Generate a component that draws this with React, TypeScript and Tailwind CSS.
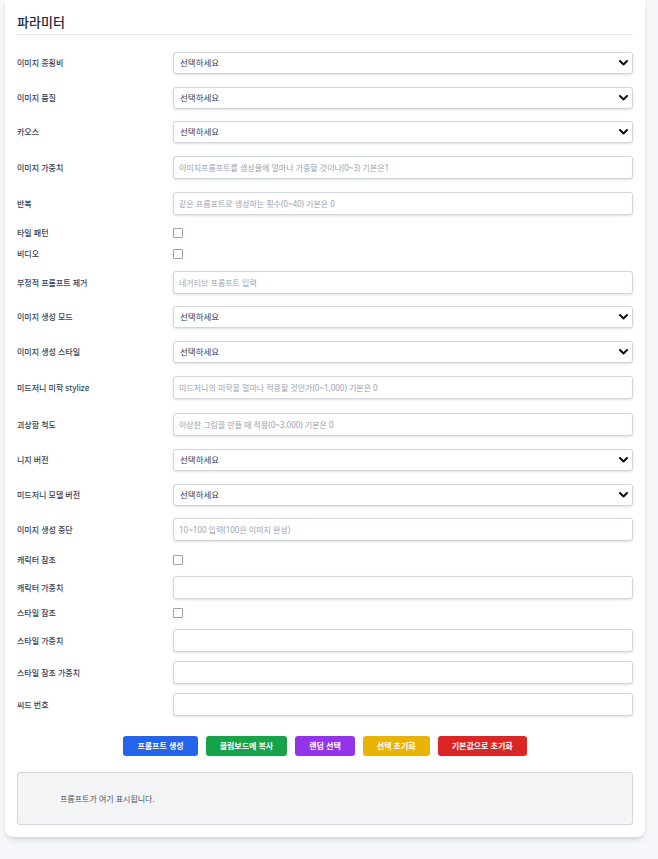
import React from 'react';

type Row = {
  label: string;
  kind: 'select' | 'input' | 'check';
  placeholder?: string;
  gap: string;
};

const rows: Row[] = [
  { label: '이미지 종횡비', kind: 'select', gap: 'mt-0' },
  { label: '이미지 품질', kind: 'select', gap: 'mt-[13px]' },
  { label: '카오스', kind: 'select', gap: 'mt-[12px]' },
  { label: '이미지 가중치', kind: 'input', placeholder: '이미지프롬프트를 생성물에 얼마나 가중할 것이나(0~3) 기본은1', gap: 'mt-[13px]' },
  { label: '반복', kind: 'input', placeholder: '같은 프롬프트로 생성하는 횟수(0~40) 기본은 0', gap: 'mt-[13px]' },
  { label: '타일 패턴', kind: 'check', gap: 'mt-[13px]' },
  { label: '비디오', kind: 'check', gap: 'mt-[12px]' },
  { label: '부정적 프롬프트 제거', kind: 'input', placeholder: '네거티브 프롬프트 입력', gap: 'mt-[13px]' },
  { label: '이미지 생성 모드', kind: 'select', gap: 'mt-[12px]' },
  { label: '이미지 생성 스타일', kind: 'select', gap: 'mt-[13px]' },
  { label: '미드저니 미학 stylize', kind: 'input', placeholder: '미드저니의 미학을 얼마나 적용할 것인가(0~1,000) 기본은 0', gap: 'mt-[13px]' },
  { label: '괴상함 척도', kind: 'input', placeholder: '이상한 그림을 만들 때 적용(0~3,000) 기본은 0', gap: 'mt-[14px]' },
  { label: '니지 버전', kind: 'select', gap: 'mt-[13px]' },
  { label: '미드저니 모델 버전', kind: 'select', gap: 'mt-[13px]' },
  { label: '이미지 생성 중단', kind: 'input', placeholder: '10~100 입력(100은 이미지 완성)', gap: 'mt-[12px]' },
  { label: '캐릭터 참조', kind: 'check', gap: 'mt-[14px]' },
  { label: '캐릭터 가중치', kind: 'input', gap: 'mt-[12px]' },
  { label: '스타일 참조', kind: 'check', gap: 'mt-[9px]' },
  { label: '스타일 가중치', kind: 'input', gap: 'mt-[12px]' },
  { label: '스타일 참조 가중치', kind: 'input', gap: 'mt-[9px]' },
  { label: '씨드 번호', kind: 'input', gap: 'mt-[9px]' },
];

const buttons = [
  { text: '프롬프트 생성', color: 'bg-[#2563eb]' },
  { text: '클립보드에 복사', color: 'bg-[#16a34a]' },
  { text: '랜덤 선택', color: 'bg-[#9333ea]' },
  { text: '선택 초기화', color: 'bg-[#eab308]' },
  { text: '기본값으로 초기화', color: 'bg-[#dc2626]' },
];

const Chevron = () => (
  <svg
    className="absolute right-[5px] top-1/2 -translate-y-1/2 pointer-events-none"
    width="9"
    height="6"
    viewBox="0 0 9 6"
  >
    <polyline points="1,1 4.5,4.5 8,1" fill="none" stroke="#111" strokeWidth="2" strokeLinecap="round" strokeLinejoin="round" />
  </svg>
);

const Control = ({ row }: { row: Row }) => {
  if (row.kind === 'select') {
    return (
      <div className="relative flex-1 h-[22px]">
        <select className="block appearance-none w-full h-[22px] bg-white border border-gray-300 rounded-[3px] shadow-sm pl-[6px] py-0 text-[8.5px] leading-[20px] font-normal text-gray-700 outline-none">
          <option>선택하세요</option>
        </select>
        <Chevron />
      </div>
    );
  }
  if (row.kind === 'check') {
    return (
      <input
        type="checkbox"
        className="block appearance-none w-[10px] h-[10px] border border-gray-400 rounded-[1px] bg-white"
      />
    );
  }
  return (
    <input
      type="text"
      placeholder={row.placeholder}
      className="block flex-1 h-[23px] bg-white border border-gray-300 rounded-[3px] shadow-sm pl-[5px] text-[8px] text-gray-700 placeholder:text-gray-400 outline-none"
    />
  );
};

export default function App() {
  return (
    <div
      className="min-h-screen bg-[#f5f7fa] pb-[22px]"
      style={{ fontFamily: '"Noto Sans", "Noto Sans CJK KR", sans-serif' }}
    >
      <div className="ml-[5px] w-[640px] bg-white rounded-b-lg shadow-md px-3 pt-[14px] pb-3">
        {/* Header */}
        <h2 className="text-[13px] leading-[16px] font-medium text-gray-800 pb-1 border-b border-gray-200">
          파라미터
        </h2>

        {/* Form rows */}
        <div className="mt-[17px] flex flex-col">
          {rows.map((row) => (
            <div
              key={row.label}
              className={`${row.gap} flex items-center ${row.kind === 'check' ? 'h-[9px]' : ''}`}
            >
              <label className="w-[156px] shrink-0 text-[8px] leading-[10px] font-medium text-gray-700">
                {row.label}
              </label>
              <Control row={row} />
            </div>
          ))}
        </div>

        {/* Actions */}
        <div className="mt-[20px] flex justify-center gap-2">
          {buttons.map((b) => (
            <button
              key={b.text}
              className={`${b.color} h-[20px] px-[14px] rounded-[3px] text-[8px] font-bold text-white`}
            >
              {b.text}
            </button>
          ))}
        </div>

        {/* Output */}
        <div className="mt-[16px] h-[53px] bg-gray-100 border border-gray-300 rounded-[3px] flex items-center pl-[42px]">
          <p className="text-[8px] text-gray-600">프롬프트가 여기 표시됩니다.</p>
        </div>
      </div>
    </div>
  );
}
